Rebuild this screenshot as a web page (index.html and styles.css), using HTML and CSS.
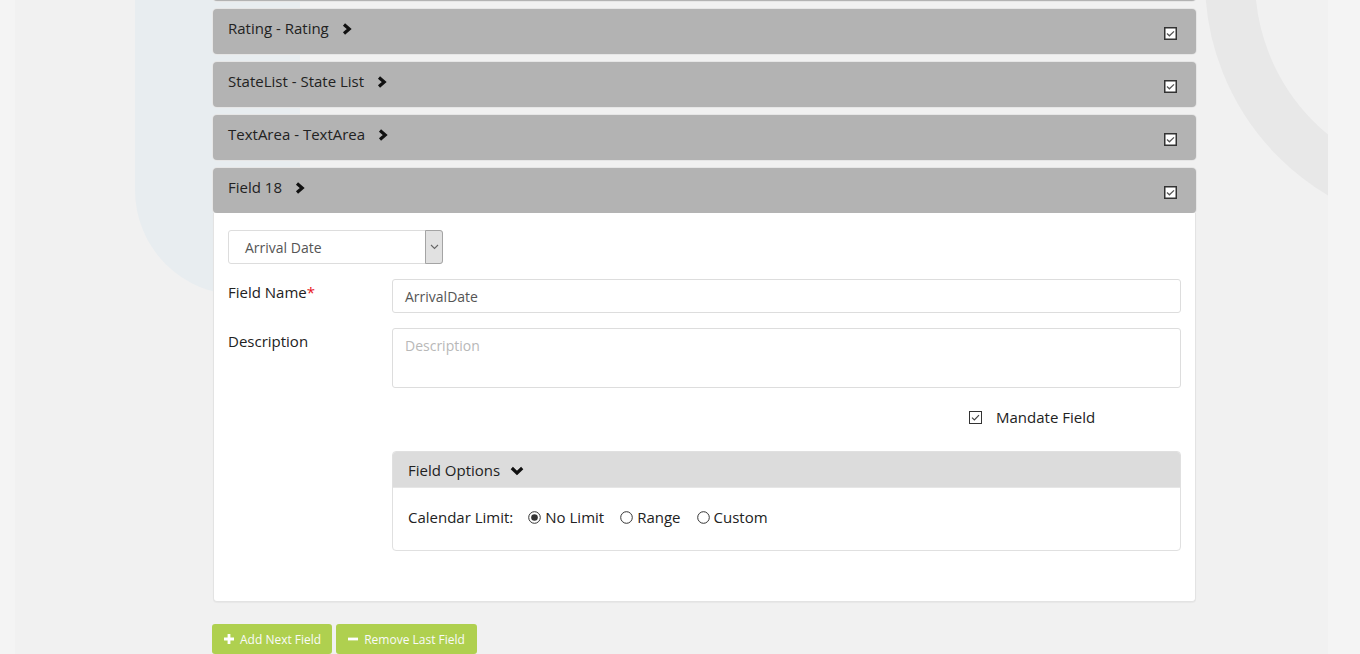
FILE: index.html
```html
<!DOCTYPE html>
<html>
<head>
<meta charset="utf-8">
<link rel="stylesheet" href="styles.css">
</head>
<body>
<div class="page">
  <svg class="bg-deco" width="1313" height="654" viewBox="15 0 1313 654" aria-hidden="true">
    <path d="M135,-10 V190 A105,105 0 0 0 240,295 H300 V-10 Z" fill="#e8edf0"/>
    <circle cx="1455" cy="-20" r="225" fill="none" stroke="#e8e8e8" stroke-width="50"/>
  </svg>
  <div class="content">
    <div class="field-list">
      <div class="field-panel">
        <div class="field-head"></div>
      </div>
      <div class="field-panel">
        <div class="field-head">
          <span class="field-title">Rating - Rating</span>
          <svg class="chev" width="10" height="12" viewBox="0 0 10 12"><polyline points="2,1.5 7.2,6 2,10.5"/></svg>
          <svg class="hcheck" width="13" height="13" viewBox="0 0 13 13"><rect x="0.75" y="0.75" width="11.5" height="11.5"/><polyline points="3,6.6 5.4,8.8 10,4.4"/></svg>
        </div>
      </div>
      <div class="field-panel">
        <div class="field-head">
          <span class="field-title">StateList - State List</span>
          <svg class="chev" width="10" height="12" viewBox="0 0 10 12"><polyline points="2,1.5 7.2,6 2,10.5"/></svg>
          <svg class="hcheck" width="13" height="13" viewBox="0 0 13 13"><rect x="0.75" y="0.75" width="11.5" height="11.5"/><polyline points="3,6.6 5.4,8.8 10,4.4"/></svg>
        </div>
      </div>
      <div class="field-panel">
        <div class="field-head">
          <span class="field-title">TextArea - TextArea</span>
          <svg class="chev" width="10" height="12" viewBox="0 0 10 12"><polyline points="2,1.5 7.2,6 2,10.5"/></svg>
          <svg class="hcheck" width="13" height="13" viewBox="0 0 13 13"><rect x="0.75" y="0.75" width="11.5" height="11.5"/><polyline points="3,6.6 5.4,8.8 10,4.4"/></svg>
        </div>
      </div>
      <div class="field-panel open">
        <div class="field-head">
          <span class="field-title">Field 18</span>
          <svg class="chev" width="10" height="12" viewBox="0 0 10 12"><polyline points="2,1.5 7.2,6 2,10.5"/></svg>
          <svg class="hcheck" width="13" height="13" viewBox="0 0 13 13"><rect x="0.75" y="0.75" width="11.5" height="11.5"/><polyline points="3,6.6 5.4,8.8 10,4.4"/></svg>
        </div>
        <div class="field-body">
          <div class="select-box">
            <span class="select-value">Arrival Date</span>
            <span class="select-arrow"><svg width="9" height="6" viewBox="0 0 9 6"><polyline points="1,1 4.5,4.5 8,1"/></svg></span>
          </div>
          <div class="form-row">
            <label class="form-label">Field Name<span class="req">*</span></label>
            <div class="text-input">ArrivalDate</div>
          </div>
          <div class="form-row">
            <label class="form-label">Description</label>
            <div class="text-area">Description</div>
          </div>
          <div class="mandate-row">
            <svg class="mcheck" width="13" height="13" viewBox="0 0 13 13"><rect x="0.5" y="0.5" width="12" height="12"/><polyline points="3,6.6 5.4,9 10,4.2"/></svg>
            <span>Mandate Field</span>
          </div>
          <div class="options-panel">
            <div class="options-head">
              <span>Field Options</span>
              <svg class="chev-down" width="14" height="10" viewBox="0 0 14 10"><polyline points="1.8,2 7,7 12.2,2"/></svg>
            </div>
            <div class="options-body">
              <span class="cal-label">Calendar Limit:</span>
              <span class="radio-item"><svg class="radio" width="13" height="13" viewBox="0 0 13 13"><circle cx="6.5" cy="6.5" r="5.8"/><circle class="dot" cx="6.5" cy="6.5" r="3.3"/></svg>No Limit</span>
              <span class="radio-item"><svg class="radio" width="13" height="13" viewBox="0 0 13 13"><circle cx="6.5" cy="6.5" r="5.8"/></svg>Range</span>
              <span class="radio-item"><svg class="radio" width="13" height="13" viewBox="0 0 13 13"><circle cx="6.5" cy="6.5" r="5.8"/></svg>Custom</span>
            </div>
          </div>
        </div>
      </div>
    </div>
    <div class="actions">
      <button class="btn-green"><svg width="10" height="10" viewBox="0 0 10 10"><path d="M3.6 0h2.8v10H3.6z M0 3.6h10v2.8H0z"/></svg>Add Next Field</button>
      <button class="btn-green"><svg width="10" height="10" viewBox="0 0 10 10"><path d="M0 3.6h10v2.8H0z"/></svg>Remove Last Field</button>
    </div>
  </div>
</div>
</body>
</html>
```

FILE: styles.css
```css
* { box-sizing: border-box; }
html, body { margin: 0; padding: 0; height: 100%; }
body {
  background: #f4f4f4;
  font-family: "Open Sans", "Liberation Sans", sans-serif;
  color: #222;
  overflow: hidden;
}
.page {
  position: relative;
  margin: 0 32px 0 15px;
  height: 654px;
  background: #f1f1f1;
  overflow: hidden;
}
.bg-deco {
  position: absolute;
  left: 0;
  top: 0;
  z-index: 0;
}
.content {
  position: relative;
  z-index: 1;
  padding-left: 198px;
  width: 1181px;
}
.field-list {
  margin-top: -44px;
  display: flex;
  flex-direction: column;
  gap: 8px;
}
.field-panel {
  border-radius: 4px;
}
.field-head {
  height: 45px;
  background: #b3b3b3;
  border-radius: 4px;
  display: flex;
  align-items: flex-start;
  padding: 9px 19px 0 15px;
  box-shadow: 0 0 0 1px #e6e6e6;
}
.field-title {
  font-size: 15px;
  line-height: 20px;
  color: #222;
}
.chev {
  margin: 5px 0 0 13px;
}
.chev polyline, .chev-down polyline {
  fill: none;
  stroke: #111;
  stroke-width: 3.2;
  stroke-linejoin: miter;
}
.hcheck {
  margin: 9px 0 0 auto;
}
.hcheck rect { fill: #fff; stroke: #333; stroke-width: 1.5; }
.hcheck polyline { fill: none; stroke: #555; stroke-width: 1.3; }

.field-body {
  background: #fff;
  border: 1px solid #e3e3e3;
  border-top: none;
  border-radius: 0 0 4px 4px;
  padding: 17px 14px 50px 14px;
  box-shadow: 0 1px 1px rgba(0,0,0,0.04);
}
.select-box {
  width: 215px;
  height: 34px;
  border: 1px solid #ddd;
  border-radius: 3px;
  display: flex;
  align-items: center;
  justify-content: space-between;
  font-size: 14px;
  color: #555;
  padding-left: 16px;
}
.select-arrow {
  width: 18px;
  height: 34px;
  margin-right: -1px;
  background: #e1e1e1;
  border: 1px solid #a4a4a4;
  border-radius: 0 3px 3px 0;
  display: flex;
  align-items: center;
  justify-content: center;
}
.select-arrow polyline { fill: none; stroke: #666; stroke-width: 1.1; }

.form-row {
  display: flex;
  margin-top: 15px;
}
.form-label {
  width: 164px;
  flex: none;
  font-size: 15px;
  line-height: 20px;
  padding-top: 3px;
  color: #222;
}
.req { color: #e8141b; }
.text-input {
  flex: 1;
  height: 34px;
  border: 1px solid #ddd;
  border-radius: 3px;
  padding: 1px 12px 0;
  font-size: 14px;
  line-height: 32px;
  color: #555;
}
.text-area {
  flex: 1;
  height: 60px;
  border: 1px solid #ddd;
  border-radius: 3px;
  padding: 7px 12px;
  font-size: 14px;
  line-height: 20px;
  color: #b8b8b8;
}
.mandate-row {
  display: flex;
  align-items: center;
  margin: 19px 0 0 741px;
  height: 20px;
  font-size: 15px;
  color: #222;
}
.mcheck { margin-right: 14px; margin-top: 1px; }
.mcheck rect { fill: #fff; stroke: #333; stroke-width: 1; }
.mcheck polyline { fill: none; stroke: #444; stroke-width: 1.2; }

.options-panel {
  margin: 24px 0 0 164px;
  border: 1px solid #e0e0e0;
  border-radius: 4px;
  overflow: hidden;
}
.options-head {
  height: 35px;
  background: #dcdcdc;
  display: flex;
  align-items: center;
  padding: 1px 15px 0;
  font-size: 15px;
  color: #222;
}
.chev-down { margin-left: 10px; margin-top: 1px; }
.options-body {
  height: 63px;
  border-top: 1px solid #e6e6e6;
  display: flex;
  align-items: center;
  padding: 0 15px 4px;
  font-size: 15px;
  color: #222;
}
.cal-label { margin-right: 15px; }
.radio-item {
  display: inline-flex;
  align-items: center;
  margin-right: 16px;
}
.radio { margin-right: 4px; }
.radio circle { fill: #fff; stroke: #333; stroke-width: 1; }
.radio circle.dot { fill: #333; stroke: none; }

.actions {
  display: flex;
  gap: 4px;
  margin: 22px 0 0 -1px;
}
.btn-green {
  height: 30px;
  background: #afd04f;
  border: none;
  border-radius: 3px;
  color: #fafafa;
  font-family: "Open Sans", "Liberation Sans", sans-serif;
  font-size: 12px;
  display: inline-flex;
  align-items: center;
  padding: 0 11px 0 12px;
}
.btn-green svg { margin-right: 6px; fill: #fff; }
.btn-green + .btn-green { padding: 0 12px 0 12px; }
```
